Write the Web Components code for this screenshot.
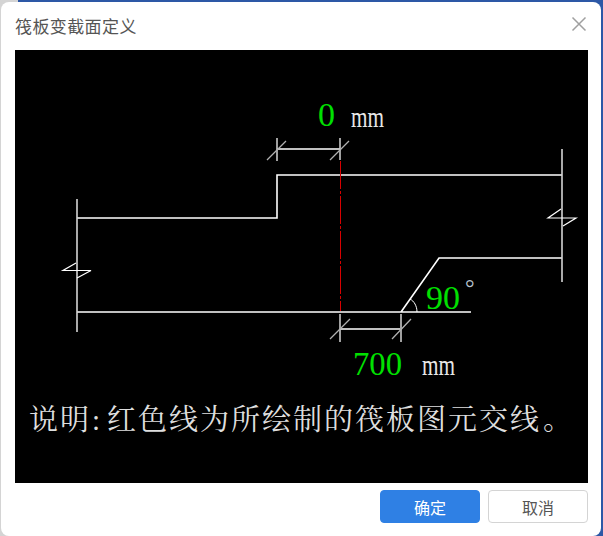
<!DOCTYPE html>
<html lang="zh">
<head>
<meta charset="utf-8">
<style>
  html, body { margin: 0; height: 100%; background: #c9c9c9; overflow: hidden; }
</style>
</head>
<body>
<section-dialog>
  <span slot="title">筏板变截面定义</span>
  <section-diagram></section-diagram>
  <dialog-button slot="actions" primary>确定</dialog-button>
  <dialog-button slot="actions">取消</dialog-button>
</section-dialog>

<template id="dialog-tpl">
  <style>
    :host {
      display: block;
      box-sizing: border-box;
      width: 603px;
      height: 536px;
      background: linear-gradient(to right, #d4d4d4 18px, #2d58a6 18px);
      padding: 2px 2px 0 1px;
    }
    .win {
      box-sizing: border-box;
      height: 534px;
      background: #fff;
      border-radius: 8px;
      padding: 0 13px 0 14px;
      display: flex;
      flex-direction: column;
    }
    header {
      height: 48px;
      display: flex;
      align-items: center;
      justify-content: space-between;
      font: 17px "Noto Sans CJK SC", sans-serif;
      letter-spacing: .4px;
      color: #555;
      padding-bottom: 1px;
      box-sizing: border-box;
    }
    header svg { display: block; margin: -3px 1px 0 0; }
    footer {
      display: flex;
      justify-content: flex-end;
      gap: 8px;
      padding-top: 7px;
    }
  </style>
  <div class="win">
    <header>
      <slot name="title"></slot>
      <svg width="16" height="16" viewBox="0 0 16 16"><path d="M1.5 1.5 14.5 14.5M14.5 1.5 1.5 14.5" stroke="#a0a0a0" stroke-width="1.5" fill="none"/></svg>
    </header>
    <slot></slot>
    <footer><slot name="actions"></slot></footer>
  </div>
</template>

<template id="diagram-tpl">
  <style>
    :host { display: block; width: 573px; height: 433px; background: #000; overflow: hidden; }
    svg { display: block; }
    text { font-family: "Liberation Serif", "Noto Serif CJK SC", "Noto Sans CJK SC", serif; }
    .g { fill: #00e000; font-size: 34px; }
    .u { fill: #e8e8e8; font-size: 30px; }
    .d { fill: #b8c4d0; font-size: 24px; }
    .n { fill: #dedede; font-size: 29px; letter-spacing: 2px; }
  </style>
  <svg width="573" height="433" viewBox="15 50 573 433">
    <g fill="none" stroke="#fff" stroke-width="1.6">
      <path d="M77 218H277V175H562M562 258H439L401 312M77 312H471"/>
      <path d="M277 149H340M340 329H400"/>
      <path d="M77 199V332M562 149V282" stroke="#d4d4d4"/>
      <path d="M277 138V161M340 138V160M340 314V342M401 314V342" stroke="#c8c8c8"/>
      <path d="M267 160 286 141M330 160 349 141M330 339 350 319M392 339 411 319" stroke="#b0b0b0" stroke-width="1.3"/>
      <path d="M76 263 63 270.5H91L77 278M561 209 548 218H576L563 226" stroke-width="1.2"/>
      <path d="M410 299C414 301 417 306 417 312" stroke-width="1"/>
    </g>
    <path d="M340.5 161V311" stroke="#d80000" stroke-width="1" stroke-dasharray="28 2 3 2"/>
    <text class="g" x="318" y="126">0</text>
    <text class="u" x="351" y="127" textLength="33" lengthAdjust="spacingAndGlyphs">mm</text>
    <text class="g" x="426" y="309">90</text>
    <text class="d" x="465" y="296">°</text>
    <text class="g" x="353" y="375" textLength="49" lengthAdjust="spacingAndGlyphs">700</text>
    <text class="u" x="422" y="375" textLength="33" lengthAdjust="spacingAndGlyphs">mm</text>
    <text class="n" x="29" y="430">说明<tspan dx="1">:</tspan><tspan dx="5">红色线为所绘制的筏板图元交线</tspan><tspan dx="2">。</tspan></text>
  </svg>
</template>

<template id="button-tpl">
  <style>
    :host { display: block; }
    button {
      box-sizing: border-box;
      width: 100px;
      height: 33px;
      border-radius: 4px;
      border: 1px solid #d4d4d4;
      background: #fff;
      color: #555;
      font: 16px "Noto Sans CJK SC", sans-serif;
      padding: 0;
    }
    :host([primary]) button { background: #2f80e4; border-color: #2f80e4; color: #fff; }
  </style>
  <button><slot></slot></button>
</template>

<script>
  function stamp(el, id) {
    el.attachShadow({ mode: 'open' });
    el.shadowRoot.appendChild(document.getElementById(id).content.cloneNode(true));
  }

  class SectionDialog extends HTMLElement {
    constructor() { super(); stamp(this, 'dialog-tpl'); }
  }
  class SectionDiagram extends HTMLElement {
    constructor() { super(); stamp(this, 'diagram-tpl'); }
  }
  class DialogButton extends HTMLElement {
    constructor() { super(); stamp(this, 'button-tpl'); }
  }

  customElements.define('section-dialog', SectionDialog);
  customElements.define('section-diagram', SectionDiagram);
  customElements.define('dialog-button', DialogButton);
</script>
</body>
</html>
